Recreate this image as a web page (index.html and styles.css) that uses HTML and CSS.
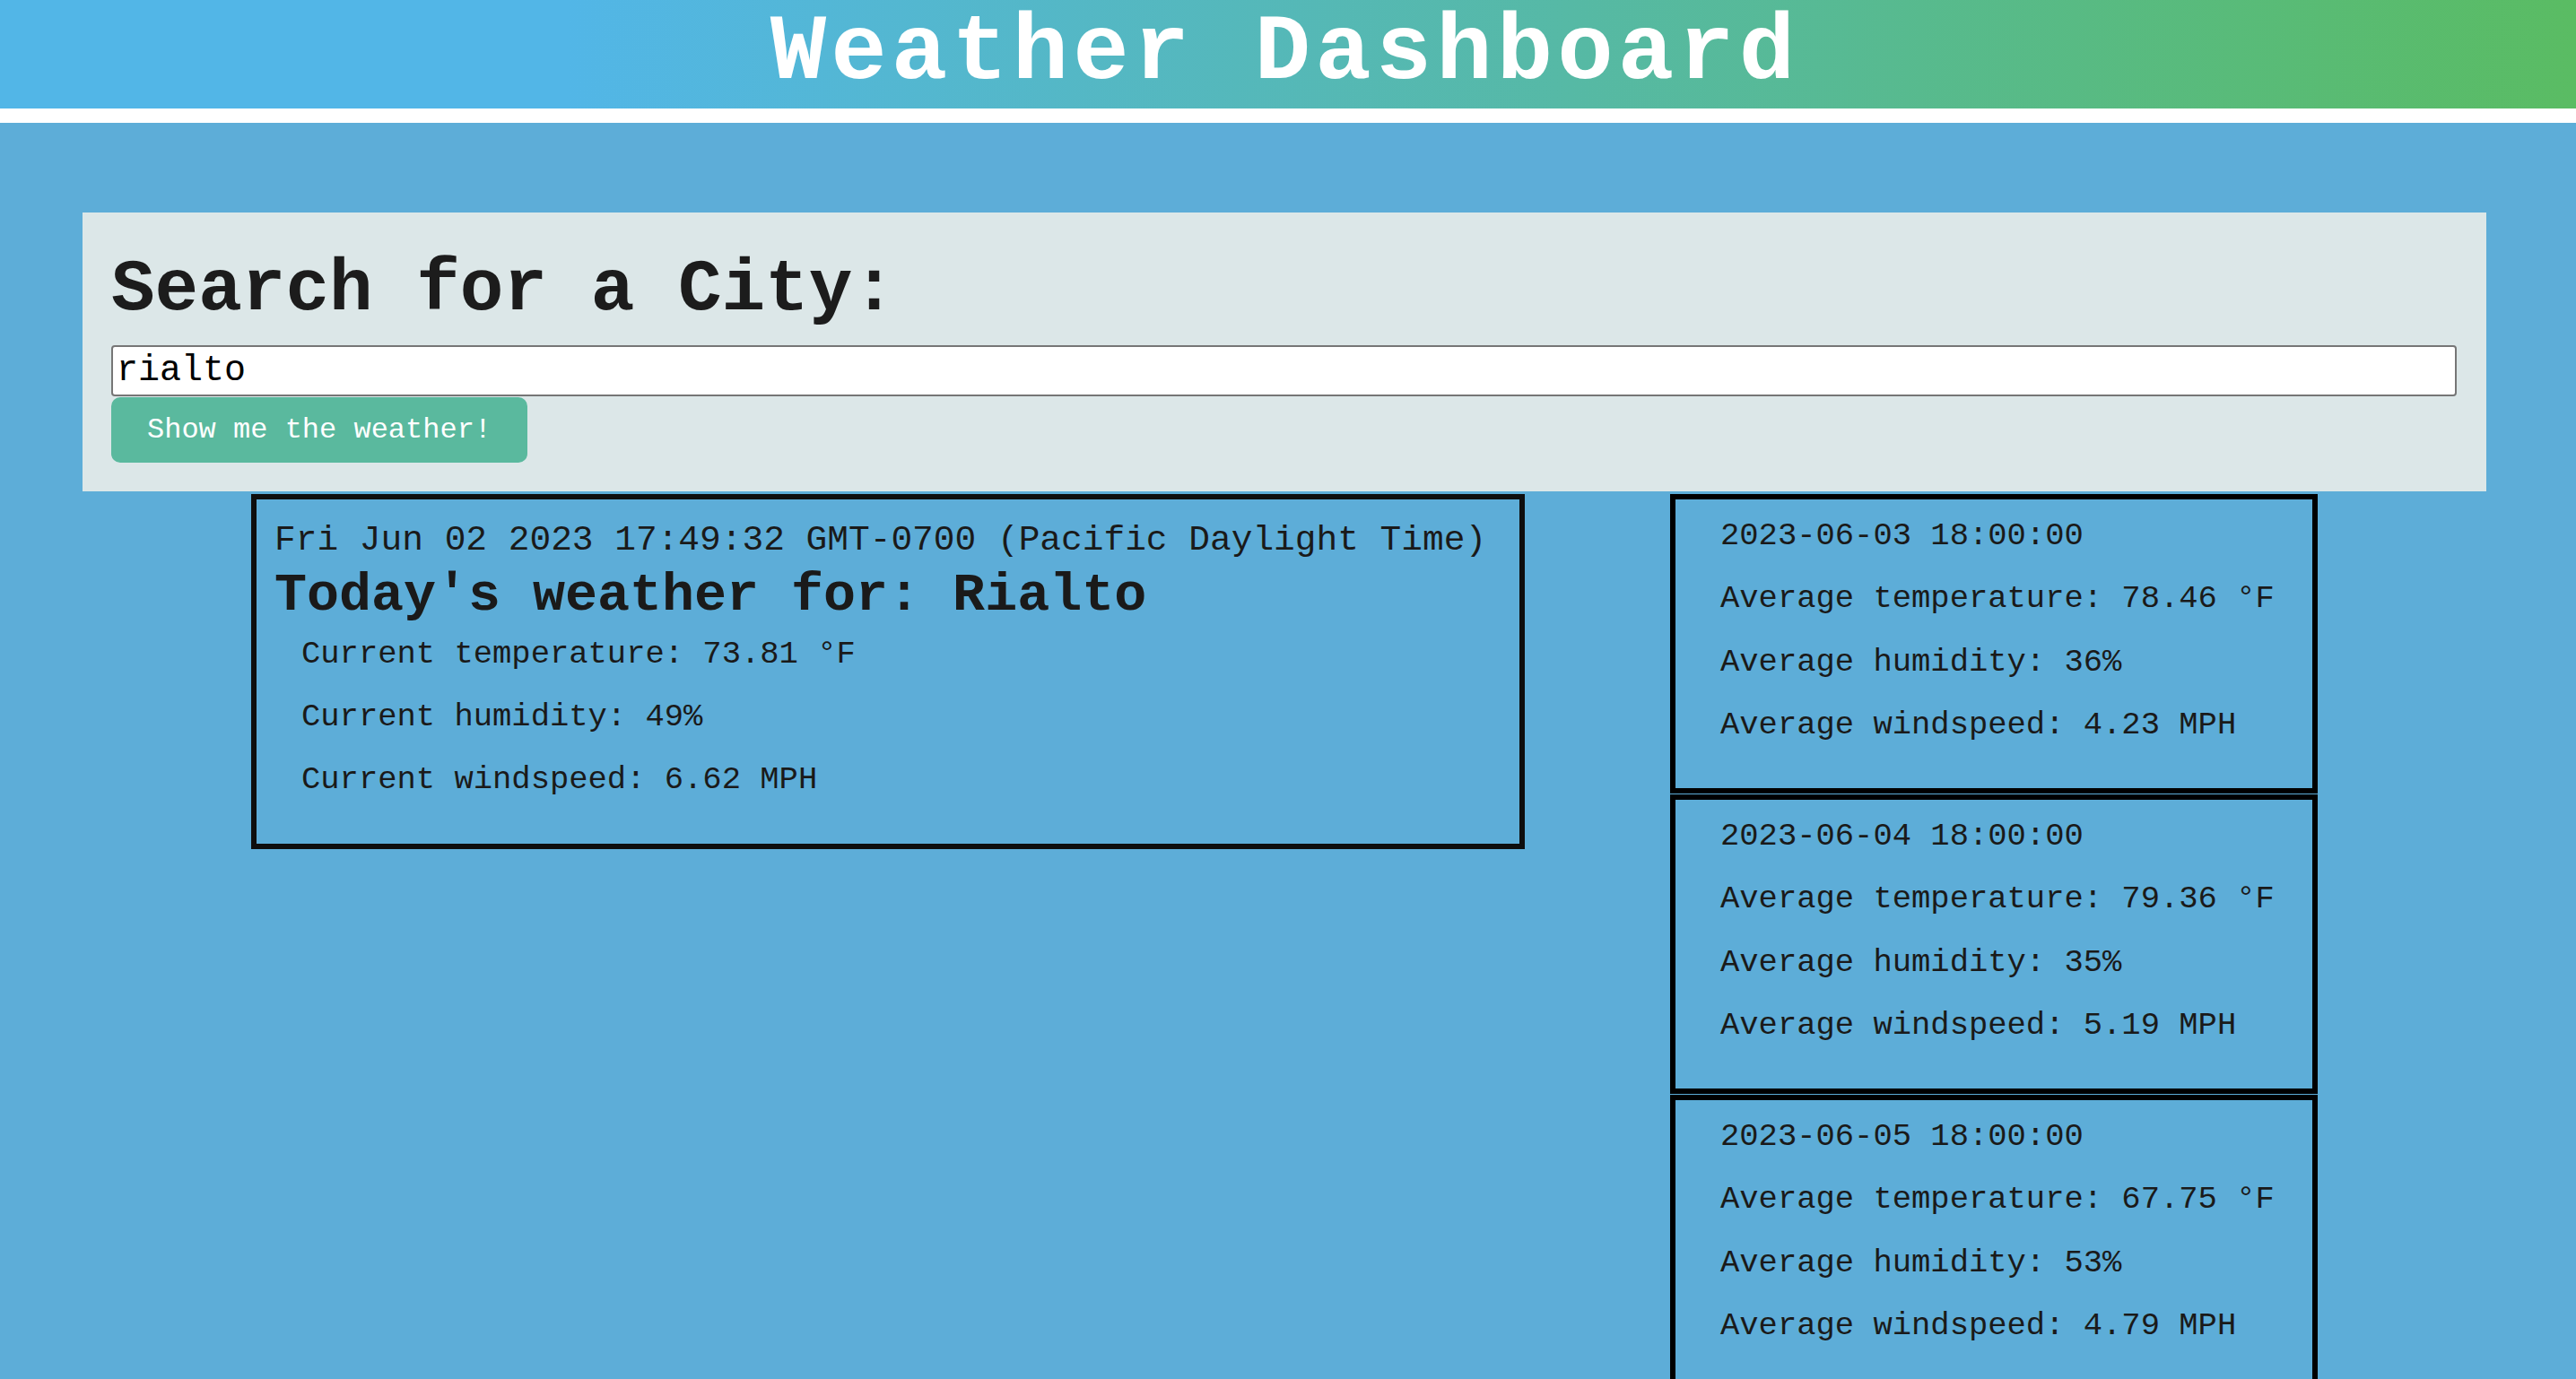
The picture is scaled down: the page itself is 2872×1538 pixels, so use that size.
FILE: index.html
```
<!DOCTYPE html>
<html lang="en">
<head>
<meta charset="utf-8">
<title>Weather Dashboard</title>
<link rel="stylesheet" href="styles.css">
</head>
<body>
<header class="site-header">
  <h1 class="site-title">Weather Dashboard</h1>
</header>
<main class="page">
  <section class="search-panel">
    <h2 class="search-title">Search for a City:</h2>
    <form class="search-form">
      <input class="search-input" type="text" value="rialto">
      <button class="search-button" type="button">Show me the weather!</button>
    </form>
  </section>
  <div class="results">
    <section class="current-card">
      <p class="current-date">Fri Jun 02 2023 17:49:32 GMT-0700 (Pacific Daylight Time)</p>
      <h3 class="current-title">Today's weather for: Rialto</h3>
      <p class="stat">Current temperature: 73.81 °F</p>
      <p class="stat">Current humidity: 49%</p>
      <p class="stat">Current windspeed: 6.62 MPH</p>
    </section>
    <div class="forecast">
      <article class="forecast-card">
        <p class="forecast-line">2023-06-03 18:00:00</p>
        <p class="forecast-line">Average temperature: 78.46 °F</p>
        <p class="forecast-line">Average humidity: 36%</p>
        <p class="forecast-line">Average windspeed: 4.23 MPH</p>
      </article>
      <article class="forecast-card">
        <p class="forecast-line">2023-06-04 18:00:00</p>
        <p class="forecast-line">Average temperature: 79.36 °F</p>
        <p class="forecast-line">Average humidity: 35%</p>
        <p class="forecast-line">Average windspeed: 5.19 MPH</p>
      </article>
      <article class="forecast-card">
        <p class="forecast-line">2023-06-05 18:00:00</p>
        <p class="forecast-line">Average temperature: 67.75 °F</p>
        <p class="forecast-line">Average humidity: 53%</p>
        <p class="forecast-line">Average windspeed: 4.79 MPH</p>
      </article>
    </div>
  </div>
</main>
</body>
</html>
```

FILE: styles.css
```
* {
  box-sizing: border-box;
}

body {
  margin: 0;
  background: #5dadd8;
  font-family: "Liberation Mono", "Courier New", monospace;
  color: #1a1a1a;
}

.site-header {
  height: 137px;
  background: linear-gradient(90deg, #52b6e7 22%, #5abc63 100%);
  border-bottom: 16px solid #ffffff;
  padding-right: 7px;
  text-align: center;
}

.site-title {
  margin: 0;
  font-size: 104px;
  line-height: 118px;
  letter-spacing: 5.1px;
  font-weight: 700;
  color: #ffffff;
}

.page {
  padding-top: 100px;
}

.search-panel {
  margin-left: 92px;
  width: 2680px;
  background: #dce7e8;
  padding: 47px 33px 32px 32px;
}

.search-title {
  margin: 0 0 21px;
  font-size: 81px;
  line-height: 80px;
  font-weight: 700;
  color: #1c1c1c;
}

.search-form {
  display: flex;
  flex-direction: column;
  align-items: flex-start;
  margin: 0;
}

.search-input {
  display: block;
  width: 100%;
  height: 57px;
  margin: 0;
  border: 2px solid #767676;
  border-radius: 4px;
  padding: 0 4px;
  background: #ffffff;
  color: #000000;
  font-family: "Liberation Mono", "Courier New", monospace;
  font-size: 40px;
}

.search-button {
  margin-top: 1px;
  height: 73px;
  padding: 0 40px;
  border: 0;
  border-radius: 10px;
  background: #5ab99e;
  color: #ffffff;
  font-family: "Liberation Mono", "Courier New", monospace;
  font-size: 32px;
}

.results {
  display: flex;
  align-items: flex-start;
  gap: 162px;
  padding-left: 280px;
  margin-top: 3px;
}

.current-card {
  width: 1420px;
  height: 396px;
  border: 6px solid #0e0e0e;
  padding: 23px 20px 0;
}

.current-date {
  margin: 0;
  font-size: 39.5px;
  line-height: 46px;
  white-space: nowrap;
}

.current-title {
  margin: 7px 0 0;
  font-size: 60px;
  line-height: 62px;
  font-weight: 700;
  color: #1a1a1a;
}

.stat {
  margin: 0 0 0 30px;
  font-size: 35.5px;
  line-height: 70px;
  white-space: nowrap;
}

.forecast {
  width: 722px;
  display: flex;
  flex-direction: column;
  gap: 1px;
}

.forecast-card {
  height: 334px;
  border: 6px solid #000000;
  padding: 6px 0 0 50px;
}

.forecast-line {
  margin: 0;
  font-size: 35.5px;
  line-height: 70.4px;
  white-space: nowrap;
}
```
